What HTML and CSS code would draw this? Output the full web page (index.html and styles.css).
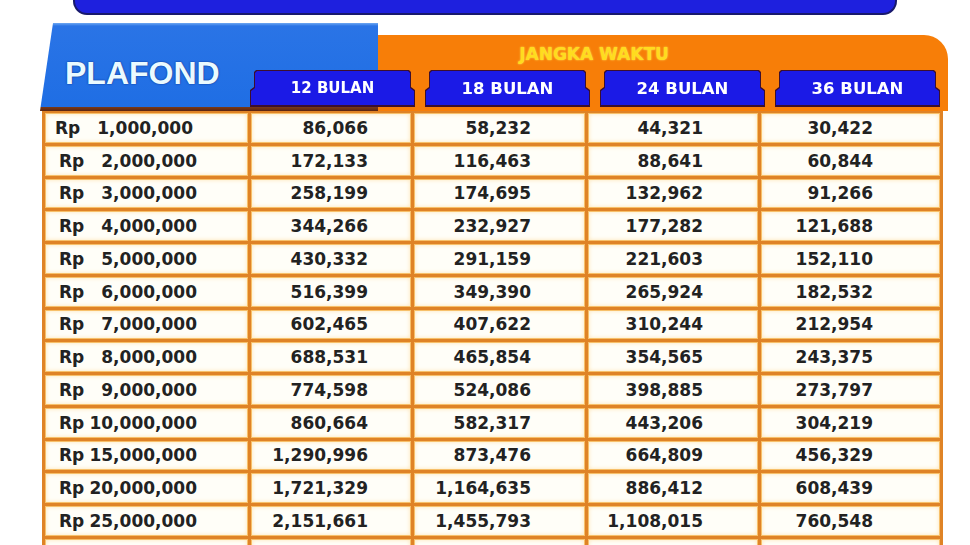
FILE: index.html
```html
<!DOCTYPE html>
<html lang="id">
<head>
<meta charset="utf-8">
<title>Tabel Angsuran</title>
<link rel="stylesheet" href="styles.css">
</head>
<body>
<div class="topbar"></div>
<div class="head">
  <div class="plafond"><span>PLAFOND</span></div>
  <div class="panel">
    <div class="jw">JANGKA WAKTU</div>
    <div class="tabs">
      <div class="tab"><div class="tab-in first">12 BULAN</div></div>
      <div class="tab"><div class="tab-in">18 BULAN</div></div>
      <div class="tab"><div class="tab-in">24 BULAN</div></div>
      <div class="tab"><div class="tab-in">36 BULAN</div></div>
    </div>
  </div>
</div>
<div class="table">
  <div class="c r1"><span>Rp</span><span>1,000,000</span></div><div class="c">86,066</div><div class="c">58,232</div><div class="c">44,321</div><div class="c">30,422</div>
  <div class="c"><span>Rp</span><span>2,000,000</span></div><div class="c">172,133</div><div class="c">116,463</div><div class="c">88,641</div><div class="c">60,844</div>
  <div class="c"><span>Rp</span><span>3,000,000</span></div><div class="c">258,199</div><div class="c">174,695</div><div class="c">132,962</div><div class="c">91,266</div>
  <div class="c"><span>Rp</span><span>4,000,000</span></div><div class="c">344,266</div><div class="c">232,927</div><div class="c">177,282</div><div class="c">121,688</div>
  <div class="c"><span>Rp</span><span>5,000,000</span></div><div class="c">430,332</div><div class="c">291,159</div><div class="c">221,603</div><div class="c">152,110</div>
  <div class="c"><span>Rp</span><span>6,000,000</span></div><div class="c">516,399</div><div class="c">349,390</div><div class="c">265,924</div><div class="c">182,532</div>
  <div class="c"><span>Rp</span><span>7,000,000</span></div><div class="c">602,465</div><div class="c">407,622</div><div class="c">310,244</div><div class="c">212,954</div>
  <div class="c"><span>Rp</span><span>8,000,000</span></div><div class="c">688,531</div><div class="c">465,854</div><div class="c">354,565</div><div class="c">243,375</div>
  <div class="c"><span>Rp</span><span>9,000,000</span></div><div class="c">774,598</div><div class="c">524,086</div><div class="c">398,885</div><div class="c">273,797</div>
  <div class="c"><span>Rp</span><span>10,000,000</span></div><div class="c">860,664</div><div class="c">582,317</div><div class="c">443,206</div><div class="c">304,219</div>
  <div class="c"><span>Rp</span><span>15,000,000</span></div><div class="c">1,290,996</div><div class="c">873,476</div><div class="c">664,809</div><div class="c">456,329</div>
  <div class="c"><span>Rp</span><span>20,000,000</span></div><div class="c">1,721,329</div><div class="c">1,164,635</div><div class="c">886,412</div><div class="c">608,439</div>
  <div class="c"><span>Rp</span><span>25,000,000</span></div><div class="c">2,151,661</div><div class="c">1,455,793</div><div class="c">1,108,015</div><div class="c">760,548</div>
  <div class="c"><span>Rp</span><span>30,000,000</span></div><div class="c">2,581,993</div><div class="c">1,746,952</div><div class="c">1,329,618</div><div class="c">912,658</div>
</div>
</body>
</html>
```
FILE: styles.css
```css
html, body {
  margin: 0;
  background: #ffffff;
  overflow: hidden;
  font-family: "DejaVu Sans", sans-serif;
}

.topbar {
  margin-left: 73px;
  width: 820px;
  height: 13px;
  background: #1e20de;
  border: 2px solid #18196c;
  border-top: 0;
  border-radius: 0 0 14px 14px;
}

.head {
  display: grid;
  grid-template-columns: 40px 200px 138px 570px;
  grid-template-rows: 12px 76px;
  margin-top: 8px;
}

.plafond {
  grid-column: 2 / 4;
  grid-row: 1 / 3;
  clip-path: polygon(13px 0, 100% 0, 100% 100%, 0 100%);
  background: linear-gradient(#6ea8f2 0, #2a74e6 3px, #1f6ee4 calc(100% - 4px), #7a3a18 calc(100% - 4px), #5a2410 100%);
  display: flex;
  align-items: center;
  padding: 12px 0 0 25px;
  box-sizing: border-box;
}

.plafond span {
  font: bold 32px "Liberation Sans", Arial, sans-serif;
  color: #eafaff;
  text-shadow: 0 0 2px #0e3c9c, 0 0 1px #0e3c9c;
}

.panel {
  grid-column: 3 / 5;
  grid-row: 2 / 3;
  background: #f77e08;
  border-radius: 24px 24px 0 0;
  padding-top: 10px;
  box-sizing: border-box;
}

.jw {
  text-align: center;
  font: bold 17px/18px "DejaVu Sans", sans-serif;
  color: #ffdc1e;
  text-shadow: 0 0 2px #ffe95a;
}

.tabs {
  display: grid;
  grid-template-columns: repeat(4, 165px);
  column-gap: 10px;
  margin: 8px 0 0 10px;
}

.tab {
  filter: drop-shadow(1px 0 0 #3c0f2e) drop-shadow(-1px 0 0 #3c0f2e) drop-shadow(0 -1px 0 #3c0f2e) drop-shadow(0 2px 0 #3c0f2e);
}

.tab-in {
  height: 34px;
  margin: 0 1px;
  background: #1b1ae6;
  color: #ffffff;
  font: bold 16.5px "DejaVu Sans", sans-serif;
  display: flex;
  align-items: center;
  justify-content: center;
  clip-path: polygon(6px 0, calc(100% - 6px) 0, calc(100% - 4px) 2px, calc(100% - 4px) 17px, 100% 20px, 100% 100%, 0 100%, 0 20px, 4px 17px, 4px 2px);
}

.tab-in.first {
  font-size: 15px;
}

.table {
  display: grid;
  grid-template-columns: 203px 160px 171px 170px 179px;
  grid-auto-rows: 29.75px;
  gap: 3px;
  padding: 3px;
  margin: -1px 0 0 42px;
  width: max-content;
  background: #df8326;
}

.c {
  background: #fffef8;
  box-shadow: inset 0 0 0 1px #f7c06a, inset 0 0 4px 1px #fde6b8;
  display: flex;
  align-items: center;
  justify-content: flex-end;
  font: bold 17px "DejaVu Sans", sans-serif;
  color: #222222;
}

.c:nth-child(5n+1) {
  justify-content: space-between;
  padding: 0 51px 0 14px;
}

.c.r1 {
  padding-left: 10px;
  padding-right: 55px;
}

.c:nth-child(5n+2) { padding-right: 43px; }
.c:nth-child(5n+3) { padding-right: 54px; }
.c:nth-child(5n+4) { padding-right: 55px; }
.c:nth-child(5n+5) { padding-right: 67px; }
```
